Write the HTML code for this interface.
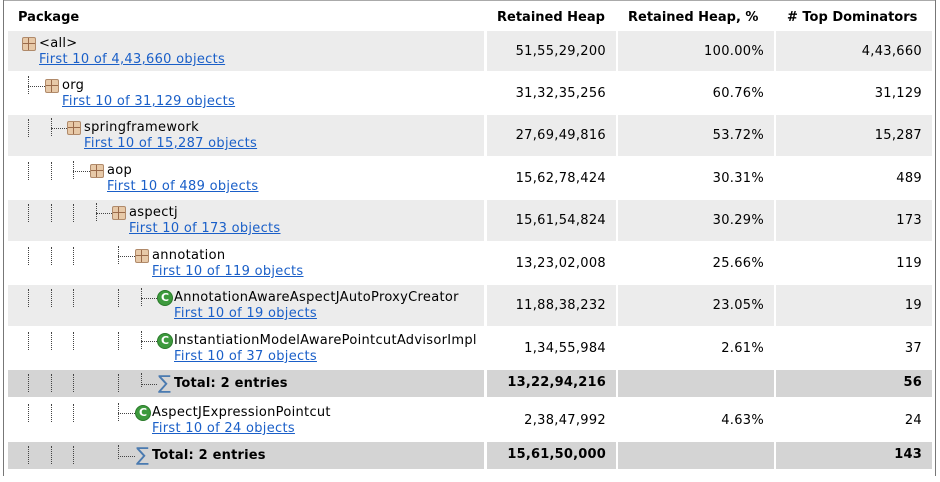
<!DOCTYPE html>
<html><head><style>
body{margin:0;background:#fff;width:940px;height:476px;overflow:hidden;font-family:"DejaVu Sans","Liberation Sans",sans-serif;font-size:13px;letter-spacing:0.3px;color:#000;position:relative}
.bl{position:absolute;left:3px;top:0;width:1px;height:476px;background:#777}
.br{position:absolute;left:935px;top:0;width:1px;height:476px;background:#777}
.tp{position:absolute;left:3px;top:0;width:933px;height:1px;background:#aaa}
.h{position:absolute;top:10px;font-weight:bold;font-size:13px;letter-spacing:0}
.c{position:absolute;background:#ececec}
.w{background:#fff}
.t{background:#d4d4d4}
.num{position:absolute;text-align:right}
.g{position:absolute;width:0;border-left:1px dotted #444}
.hz{position:absolute;height:0;border-top:1px dotted #444}
.pk{position:absolute;width:14px;height:14px;background:#e7c9a8;border:1px solid #b08a6a;border-radius:2px;box-sizing:border-box}
.pk:before{content:"";position:absolute;left:5px;top:0;width:1px;height:12px;background:#9a6a4a}
.pk:after{content:"";position:absolute;top:5px;left:0;height:1px;width:12px;background:#9a6a4a}
.ci{position:absolute;width:16px;height:16px;border-radius:50%;background:#3d9a3d;color:#fff;font-weight:bold;font-size:11px;letter-spacing:0;line-height:14px;text-align:center;border:1px solid #2a7a2a;box-sizing:border-box}
.sg{position:absolute;color:#4a7ab0;font-size:19px;line-height:19px;letter-spacing:0}
.nm{position:absolute;white-space:nowrap}
.lk{position:absolute;white-space:nowrap;color:#1a5fc8;text-decoration:underline}
.b{font-weight:bold;letter-spacing:0.2px}
</style></head><body>
<div class="tp"></div><div class="bl"></div><div class="br"></div>
<div class="h" style="left:18px">Package</div>
<div class="h" style="left:497px">Retained Heap</div>
<div class="h" style="left:628px">Retained Heap, %</div>
<div class="h" style="left:787px"># Top Dominators</div>
<div id="rows"></div>
<script>
const rows=[
[31,40,'',0,'pk','&lt;all&gt;','First 10 of 4,43,660 objects','51,55,29,200','100.00%','4,43,660',[],0],
[73,40,'w',1,'pk','org','First 10 of 31,129 objects','31,32,35,256','60.76%','31,129',[],0],
[115,41,'',2,'pk','springframework','First 10 of 15,287 objects','27,69,49,816','53.72%','15,287',[0],0],
[158,40,'w',3,'pk','aop','First 10 of 489 objects','15,62,78,424','30.31%','489',[0,1],0],
[200,41,'',4,'pk','aspectj','First 10 of 173 objects','15,61,54,824','30.29%','173',[0,1,2],0],
[243,40,'w',5,'pk','annotation','First 10 of 119 objects','13,23,02,008','25.66%','119',[0,1,2],0],
[285,41,'',6,'ci','AnnotationAwareAspectJAutoProxyCreator','First 10 of 19 objects','11,88,38,232','23.05%','19',[0,1,2,4],0],
[328,40,'w',6,'ci','InstantiationModelAwarePointcutAdvisorImpl','First 10 of 37 objects','1,34,55,984','2.61%','37',[0,1,2,4],0],
[370,27,'t',6,'sg','Total: 2 entries','','13,22,94,216','','56',[0,1,2,4],1],
[400,40,'w',5,'ci','AspectJExpressionPointcut','First 10 of 24 objects','2,38,47,992','4.63%','24',[0,1,2],0],
[442,27,'t',5,'sg','Total: 2 entries','','15,61,50,000','','143',[0,1,2],1],
[472,10,'w',0,'','','','','','',[],2]
];
const gx=k=>Math.round(28+22.5*k);
let h='';
for(const r of rows){
 const [y,ht,cls,L,ic,name,link,a,b,c,guides,tot]=r;
 const cols=[[8,476],[487,129],[618,156],[776,156]];
 for(const [x,w] of cols) h+=`<div class="c ${cls}" style="left:${x}px;top:${y}px;width:${w}px;height:${ht}px"></div>`;
 if(tot==2) continue;
 const ix=Math.round(22+22.5*L);
 const ty=tot?y+7:y+6;
 for(const k of guides) h+=`<div class="g" style="left:${gx(k)}px;top:${y+4}px;height:18px"></div>`;
 if(L>0){const cx=gx(L-1);h+=`<div class="g" style="left:${cx}px;top:${y+3}px;height:${tot?14:18}px"></div><div class="hz" style="left:${cx}px;top:${ty+7}px;width:${ix-cx}px"></div>`;}
 if(ic=='pk') h+=`<div class="pk" style="left:${ix}px;top:${ty}px"></div>`;
 if(ic=='ci') h+=`<div class="ci" style="left:${ix}px;top:${ty-1}px">C</div>`;
 if(ic=='sg') h+=`<div class="sg" style="left:${ix+1}px;top:${ty-3}px">∑</div>`;
 const tx=ix+17;
 h+=`<div class="nm${tot?' b':''}" style="left:${tx}px;top:${ty-1}px">${name}</div>`;
 if(link) h+=`<div class="lk" style="left:${tx}px;top:${y+21}px">${link}</div>`;
 const vy=tot?y+5:y+13;const bb=tot?' b':'';
 h+=`<div class="num${bb}" style="right:${940-606}px;top:${vy}px">${a}</div>`;
 h+=`<div class="num${bb}" style="right:${940-764}px;top:${vy}px">${b}</div>`;
 h+=`<div class="num${bb}" style="right:${940-922}px;top:${vy}px">${c}</div>`;
}
document.getElementById('rows').innerHTML=h;
</script>
</body></html>
